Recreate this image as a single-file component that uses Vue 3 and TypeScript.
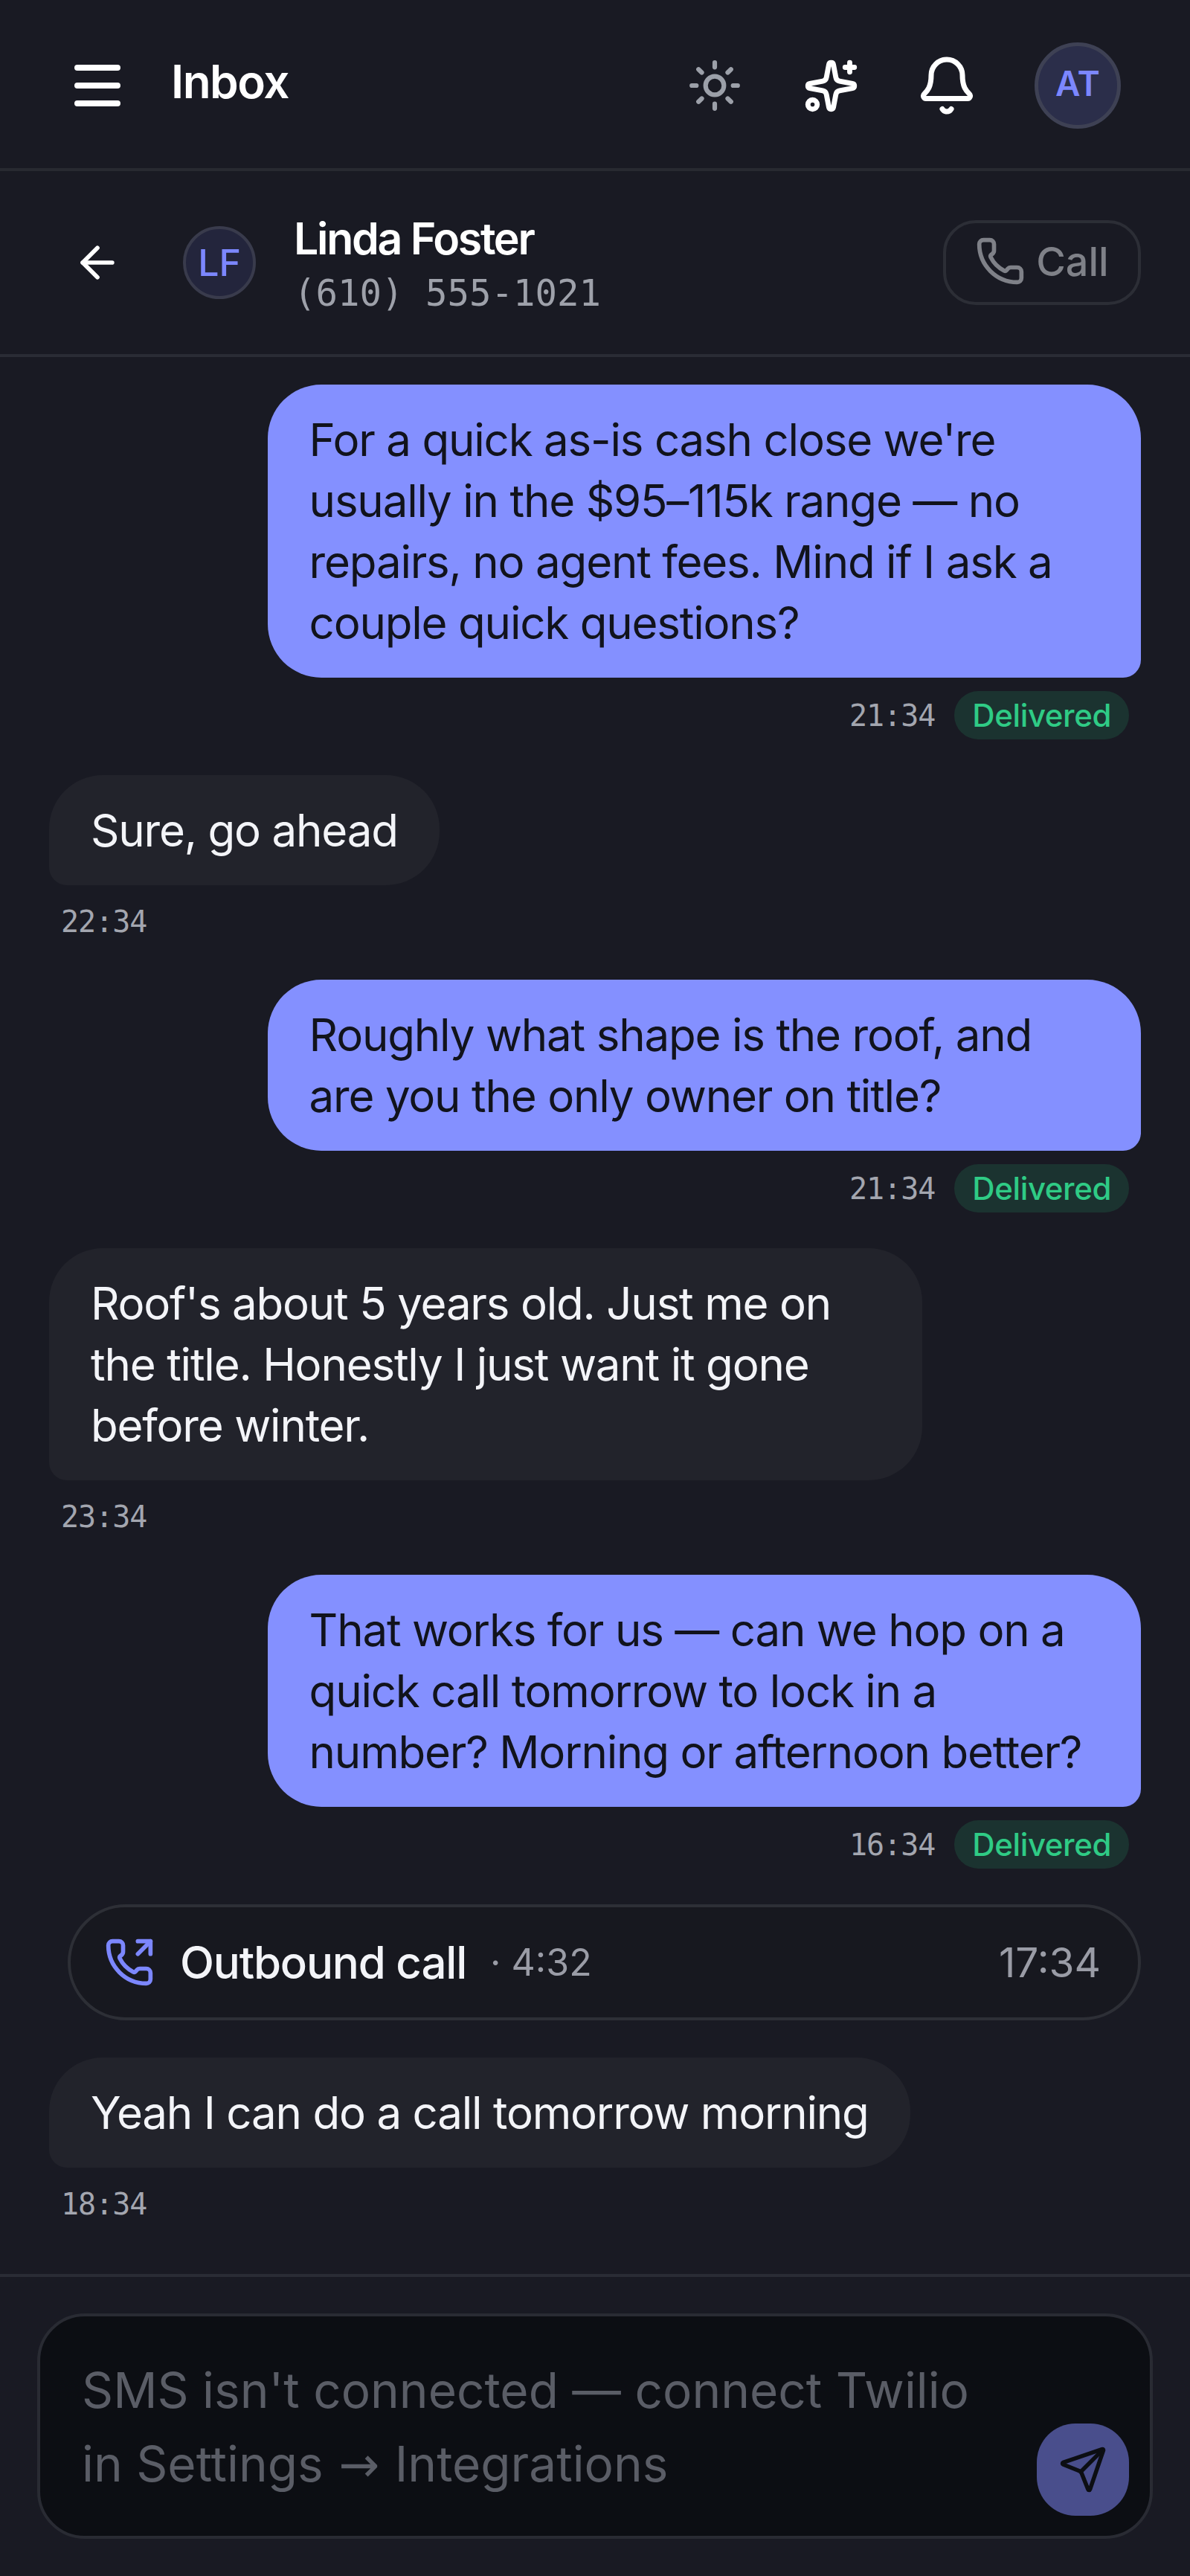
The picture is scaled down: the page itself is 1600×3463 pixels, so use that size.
<script setup lang="ts">
type Item =
  | { kind: 'out'; text: string; time: string }
  | { kind: 'in'; text: string; time: string }
  | { kind: 'call'; label: string; duration: string; time: string }

const items: Item[] = [
  { kind: 'out', text: "For a quick as-is cash close we're usually in the $95–115k range — no repairs, no agent fees. Mind if I ask a couple quick questions?", time: '21:34' },
  { kind: 'in', text: 'Sure, go ahead', time: '22:34' },
  { kind: 'out', text: 'Roughly what shape is the roof, and are you the only owner on title?', time: '21:34' },
  { kind: 'in', text: "Roof's about 5 years old. Just me on the title. Honestly I just want it gone before winter.", time: '23:34' },
  { kind: 'out', text: 'That works for us — can we hop on a quick call tomorrow to lock in a number? Morning or afternoon better?', time: '16:34' },
  { kind: 'call', label: 'Outbound call', duration: '· 4:32', time: '17:34' },
  { kind: 'in', text: 'Yeah I can do a call tomorrow morning', time: '18:34' }
]
</script>

<template>
  <div class="screen">
    <header class="topbar">
      <button class="icon-btn menu" aria-label="Menu">
        <svg width="96" height="96" viewBox="0 0 96 96" fill="none" stroke="currentColor" stroke-width="8" stroke-linecap="round">
          <path d="M21 24h54M21 48h54M21 72h54" />
        </svg>
      </button>
      <h1 class="title">Inbox</h1>
      <div class="top-actions">
        <svg class="sun" width="74" height="74" viewBox="0 0 24 24" fill="none" stroke="currentColor" stroke-width="2" stroke-linecap="round" stroke-linejoin="round">
          <circle cx="12" cy="12" r="4" />
          <path d="M12 2v2M12 20v2M4.93 4.93l1.41 1.41M17.66 17.66l1.41 1.41M2 12h2M20 12h2M6.34 17.66l-1.41 1.41M19.07 4.93l-1.41 1.41" />
        </svg>
        <svg class="sparkles" width="75" height="75" viewBox="0 0 24 24" fill="none" stroke="currentColor" stroke-width="2.2" stroke-linecap="round" stroke-linejoin="round">
          <path d="M11.017 2.814a1 1 0 0 1 1.966 0l1.051 5.558a2 2 0 0 0 1.594 1.594l5.558 1.051a1 1 0 0 1 0 1.966l-5.558 1.051a2 2 0 0 0-1.594 1.594l-1.051 5.558a1 1 0 0 1-1.966 0l-1.051-5.558a2 2 0 0 0-1.594-1.594l-5.558-1.051a1 1 0 0 1 0-1.966l5.558-1.051a2 2 0 0 0 1.594-1.594z" />
          <path d="M20 2v4M22 4h-4" />
          <circle cx="4" cy="20" r="2" />
        </svg>
        <svg width="84" height="84" viewBox="0 0 24 24" fill="none" stroke="currentColor" stroke-width="2" stroke-linecap="round" stroke-linejoin="round">
          <path d="M10.268 21a2 2 0 0 0 3.464 0" />
          <path d="M3.262 15.326A1 1 0 0 0 4 17h16a1 1 0 0 0 .74-1.673C19.41 13.956 18 12.499 18 8A6 6 0 0 0 6 8c0 4.499-1.411 5.956-2.738 7.326" />
        </svg>
        <div class="avatar me">AT</div>
      </div>
    </header>

    <section class="contact">
      <svg class="back" width="68" height="68" viewBox="0 0 24 24" fill="none" stroke="currentColor" stroke-width="2" stroke-linecap="round" stroke-linejoin="round">
        <path d="m12 19-7-7 7-7" />
        <path d="M19 12H5" />
      </svg>
      <div class="avatar them">LF</div>
      <div class="who">
        <div class="name">Linda Foster</div>
        <div class="phone">(610) 555-1021</div>
      </div>
      <button class="call-btn">
        <svg width="68" height="68" viewBox="0 0 24 24" fill="none" stroke="currentColor" stroke-width="2" stroke-linecap="round" stroke-linejoin="round">
          <path d="M13.832 16.568a1 1 0 0 0 1.213-.303l.355-.465A2 2 0 0 1 17 15h3a2 2 0 0 1 2 2v3a2 2 0 0 1-2 2A18 18 0 0 1 2 4a2 2 0 0 1 2-2h3a2 2 0 0 1 2 2v3a2 2 0 0 1-.8 1.6l-.468.351a1 1 0 0 0-.292 1.233 14 14 0 0 0 6.392 6.384" />
        </svg>
        <span>Call</span>
      </button>
    </section>

    <main class="thread">
      <template v-for="(item, i) in items" :key="i">
        <div v-if="item.kind === 'call'" class="call-row">
          <svg width="68" height="68" viewBox="0 0 24 24" fill="none" stroke="currentColor" stroke-width="2" stroke-linecap="round" stroke-linejoin="round">
            <path d="m16 8 6-6" />
            <path d="M22 8V2h-6" />
            <path d="M13.832 16.568a1 1 0 0 0 1.213-.303l.355-.465A2 2 0 0 1 17 15h3a2 2 0 0 1 2 2v3a2 2 0 0 1-2 2A18 18 0 0 1 2 4a2 2 0 0 1 2-2h3a2 2 0 0 1 2 2v3a2 2 0 0 1-.8 1.6l-.468.351a1 1 0 0 0-.292 1.233 14 14 0 0 0 6.392 6.384" />
          </svg>
          <span class="call-label">{{ item.label }}</span>
          <span class="call-dur">{{ item.duration }}</span>
          <span class="call-time">{{ item.time }}</span>
        </div>
        <div v-else class="msg" :class="item.kind">
          <div class="bubble">{{ item.text }}</div>
          <div class="meta">
            <span class="time">{{ item.time }}</span>
            <span v-if="item.kind === 'out'" class="status">Delivered</span>
          </div>
        </div>
      </template>
    </main>

    <footer class="composer-wrap">
      <div class="composer">
        <div class="placeholder">SMS isn't connected — connect Twilio in Settings <span class="arrow">→</span> Integrations</div>
        <button class="send" aria-label="Send">
          <svg width="66" height="66" viewBox="0 0 24 24" fill="none" stroke="currentColor" stroke-width="2" stroke-linecap="round" stroke-linejoin="round">
            <path d="M14.536 21.686a.5.5 0 0 0 .937-.024l6.5-19a.496.496 0 0 0-.635-.635l-19 6.5a.5.5 0 0 0-.024.937l7.93 3.18a2 2 0 0 1 1.112 1.11z" />
            <path d="m21.854 2.147-10.94 10.939" />
          </svg>
        </button>
      </div>
    </footer>
  </div>
</template>

<style scoped>
.screen {
  width: 1600px;
  height: 3463px;
  display: flex;
  flex-direction: column;
  overflow: hidden;
  background: #191a23;
  color: #f3f4f8;
  font-family: Inter, "Liberation Sans", sans-serif;
}

.topbar {
  height: 222px;
  flex: none;
  display: flex;
  align-items: center;
  padding: 4px 93px 0 83px;
  border-bottom: 4px solid #282a31;
}

.icon-btn {
  display: flex;
  padding: 0;
  border: 0;
  background: none;
  color: #fff;
}

.title {
  margin: 0 0 12px 51px;
  font-size: 62px;
  font-weight: 600;
  letter-spacing: -1.5px;
  color: #fff;
}

.top-actions {
  margin-left: auto;
  display: flex;
  align-items: center;
  gap: 76px;
  color: #fff;
}

.sparkles {
  margin-left: 6px;
}

.sun {
  color: #9ca0a9;
}

.avatar {
  display: flex;
  align-items: center;
  justify-content: center;
  border-radius: 50%;
  box-sizing: border-box;
  color: #7c87ff;
  font-weight: 600;
}

.avatar.me {
  width: 116px;
  height: 116px;
  padding-bottom: 6px;
  font-size: 46px;
  background: #2b2e4a;
  border: 5px solid #3e4154;
}

.avatar.them {
  width: 98px;
  height: 98px;
  margin-left: 81px;
  font-size: 50px;
  font-weight: 500;
  background: #23253c;
  border: 4px solid #393b4c;
}

.contact {
  height: 246px;
  flex: none;
  display: flex;
  align-items: center;
  padding: 0 66px 0 97px;
  border-bottom: 4px solid #2a2c35;
}

.back {
  color: #fff;
}

.who {
  margin-left: 51px;
  padding-top: 6px;
  min-width: 0;
}

.name {
  font-size: 59px;
  font-weight: 600;
  line-height: 72px;
  letter-spacing: -2.3px;
  color: #fff;
}

.phone {
  margin-top: 6px;
  font-family: "DejaVu Sans Mono", monospace;
  font-size: 49px;
  line-height: 64px;
  color: #9ea1aa;
}

.call-btn {
  margin-left: auto;
  width: 266px;
  height: 114px;
  display: flex;
  align-items: center;
  justify-content: center;
  gap: 14px;
  padding: 0 0 4px;
  background: none;
  border: 4px solid #2c2e36;
  border-radius: 44px;
  color: #7f8188;
  font-family: inherit;
  font-size: 54px;
  font-weight: 500;
}

.thread {
  flex: 1;
  min-height: 0;
  display: flex;
  flex-direction: column;
  padding: 37px 66px 0;
  box-sizing: border-box;
}

.msg {
  flex: none;
  display: flex;
  flex-direction: column;
  margin-bottom: 48px;
}

.msg.out {
  align-items: flex-end;
}

.msg.in {
  align-items: flex-start;
  margin-bottom: 46px;
}

.bubble {
  max-width: 80%;
  box-sizing: border-box;
  padding: 33px 56px;
  font-size: 60px;
  line-height: 82px;
  letter-spacing: -1.2px;
  border-radius: 72px;
}

.out .bubble {
  background: #8490ff;
  color: #11131c;
  border-bottom-right-radius: 24px;
}

.in .bubble {
  background: #22232b;
  color: #f3f4f8;
  border-bottom-left-radius: 24px;
}

.meta {
  display: flex;
  align-items: center;
  gap: 26px;
  height: 65px;
  margin-top: 18px;
  padding: 0 16px;
}

.in .meta {
  margin-top: 16px;
}

.time {
  font-family: "DejaVu Sans Mono", monospace;
  font-size: 40px;
  letter-spacing: -1px;
  color: #a3a6af;
}

.status {
  padding: 0 24px;
  height: 65px;
  line-height: 65px;
  border-radius: 33px;
  background: #1b3330;
  color: #2fcb85;
  font-size: 42px;
  font-weight: 500;
  letter-spacing: -0.4px;
}

.call-row {
  flex: none;
  align-self: flex-end;
  width: 1443px;
  height: 156px;
  box-sizing: border-box;
  display: flex;
  align-items: center;
  margin-bottom: 50px;
  padding: 0 50px 0 45px;
  border: 4px solid #2d2f36;
  border-radius: 78px;
  background: #17181f;
  color: #7c87ff;
}

.call-label {
  margin-left: 34px;
  font-size: 60px;
  font-weight: 500;
  letter-spacing: -1.2px;
  color: #f3f4f8;
}

.call-dur {
  margin-left: 32px;
  font-size: 50px;
  color: #9a9ca6;
}

.call-time {
  margin-left: auto;
  font-size: 55px;
  color: #9a9ca6;
}

.composer-wrap {
  height: 406px;
  flex: none;
  box-sizing: border-box;
  padding: 49px 50px 0;
  border-top: 4px solid #2a2c35;
}

.composer {
  position: relative;
  height: 303px;
  box-sizing: border-box;
  padding: 50px 210px 0 56px;
  background: #0c0e13;
  border: 4px solid #292b33;
  border-radius: 64px;
}

.placeholder {
  font-size: 65.7px;
  line-height: 99px;
  color: #5a5d66;
}

.arrow {
  display: inline-block;
  margin: 0 2px;
  line-height: 1;
  font-family: "DejaVu Sans", sans-serif;
}

.send {
  position: absolute;
  right: 28px;
  bottom: 27px;
  width: 124px;
  height: 124px;
  display: flex;
  align-items: center;
  justify-content: center;
  padding: 0;
  border: 0;
  border-radius: 52px;
  background: #494e8c;
  color: #0c0e13;
}
</style>

<style>
html,
body {
  margin: 0;
  background: #191a23;
}
</style>
